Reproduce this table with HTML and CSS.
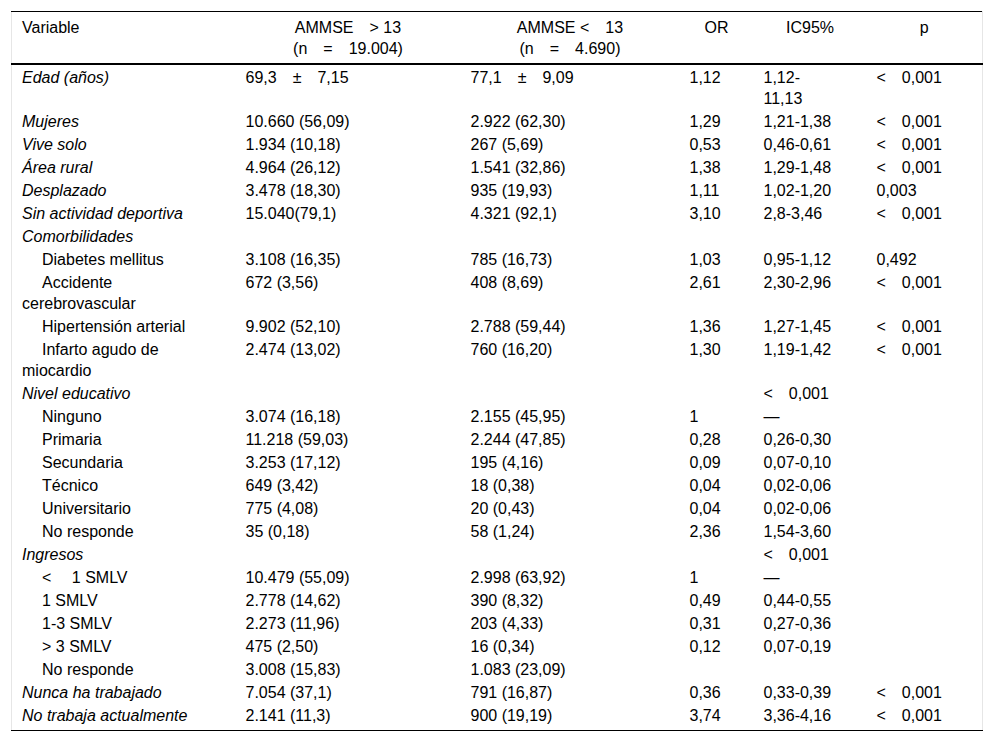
FILE: index.html
```html
<!DOCTYPE html>
<html lang="es">
<head>
<meta charset="utf-8">
<title>Tabla</title>
<link rel="stylesheet" href="styles.css">
</head>
<body>
<div class="wrap">
<table class="tbl">
<colgroup>
<col class="c1"><col class="c2"><col class="c3"><col class="c4"><col class="c5"><col class="c6">
</colgroup>
<thead>
<tr>
<th class="left">Variable</th>
<th>AMMSE&emsp;&gt; 13<br>(n&emsp;=&emsp;19.004)</th>
<th>AMMSE &lt;&emsp;13<br>(n&emsp;=&emsp;4.690)</th>
<th>OR</th>
<th>IC95%</th>
<th>p</th>
</tr>
</thead>
<tbody>
<tr><td class="v">Edad (años)</td><td>69,3&emsp;±&emsp;7,15</td><td>77,1&emsp;±&emsp;9,09</td><td>1,12</td><td>1,12-<br>11,13</td><td>&lt;&emsp;0,001</td></tr>
<tr><td class="v">Mujeres</td><td>10.660 (56,09)</td><td>2.922 (62,30)</td><td>1,29</td><td>1,21-1,38</td><td>&lt;&emsp;0,001</td></tr>
<tr><td class="v">Vive solo</td><td>1.934 (10,18)</td><td>267 (5,69)</td><td>0,53</td><td>0,46-0,61</td><td>&lt;&emsp;0,001</td></tr>
<tr><td class="v">Área rural</td><td>4.964 (26,12)</td><td>1.541 (32,86)</td><td>1,38</td><td>1,29-1,48</td><td>&lt;&emsp;0,001</td></tr>
<tr><td class="v">Desplazado</td><td>3.478 (18,30)</td><td>935 (19,93)</td><td>1,11</td><td>1,02-1,20</td><td>0,003</td></tr>
<tr><td class="v">Sin actividad deportiva</td><td>15.040(79,1)</td><td>4.321 (92,1)</td><td>3,10</td><td>2,8-3,46</td><td>&lt;&emsp;0,001</td></tr>
<tr><td class="v">Comorbilidades</td><td></td><td></td><td></td><td></td><td></td></tr>
<tr><td class="sub">Diabetes mellitus</td><td>3.108 (16,35)</td><td>785 (16,73)</td><td>1,03</td><td>0,95-1,12</td><td>0,492</td></tr>
<tr><td class="sub">Accidente<br>cerebrovascular</td><td>672 (3,56)</td><td>408 (8,69)</td><td>2,61</td><td>2,30-2,96</td><td>&lt;&emsp;0,001</td></tr>
<tr><td class="sub">Hipertensión arterial</td><td>9.902 (52,10)</td><td>2.788 (59,44)</td><td>1,36</td><td>1,27-1,45</td><td>&lt;&emsp;0,001</td></tr>
<tr><td class="sub">Infarto agudo de<br>miocardio</td><td>2.474 (13,02)</td><td>760 (16,20)</td><td>1,30</td><td>1,19-1,42</td><td>&lt;&emsp;0,001</td></tr>
<tr><td class="v">Nivel educativo</td><td></td><td></td><td></td><td>&lt;&emsp;0,001</td><td></td></tr>
<tr><td class="sub">Ninguno</td><td>3.074 (16,18)</td><td>2.155 (45,95)</td><td>1</td><td>—</td><td></td></tr>
<tr><td class="sub">Primaria</td><td>11.218 (59,03)</td><td>2.244 (47,85)</td><td>0,28</td><td>0,26-0,30</td><td></td></tr>
<tr><td class="sub">Secundaria</td><td>3.253 (17,12)</td><td>195 (4,16)</td><td>0,09</td><td>0,07-0,10</td><td></td></tr>
<tr><td class="sub">Técnico</td><td>649 (3,42)</td><td>18 (0,38)</td><td>0,04</td><td>0,02-0,06</td><td></td></tr>
<tr><td class="sub">Universitario</td><td>775 (4,08)</td><td>20 (0,43)</td><td>0,04</td><td>0,02-0,06</td><td></td></tr>
<tr><td class="sub">No responde</td><td>35 (0,18)</td><td>58 (1,24)</td><td>2,36</td><td>1,54-3,60</td><td></td></tr>
<tr><td class="v">Ingresos</td><td></td><td></td><td></td><td>&lt;&emsp;0,001</td><td></td></tr>
<tr><td class="sub">&lt;&emsp; 1 SMLV</td><td>10.479 (55,09)</td><td>2.998 (63,92)</td><td>1</td><td>—</td><td></td></tr>
<tr><td class="sub">1 SMLV</td><td>2.778 (14,62)</td><td>390 (8,32)</td><td>0,49</td><td>0,44-0,55</td><td></td></tr>
<tr><td class="sub">1-3 SMLV</td><td>2.273 (11,96)</td><td>203 (4,33)</td><td>0,31</td><td>0,27-0,36</td><td></td></tr>
<tr><td class="sub">&gt; 3 SMLV</td><td>475 (2,50)</td><td>16 (0,34)</td><td>0,12</td><td>0,07-0,19</td><td></td></tr>
<tr><td class="sub">No responde</td><td>3.008 (15,83)</td><td>1.083 (23,09)</td><td></td><td></td><td></td></tr>
<tr><td class="v">Nunca ha trabajado</td><td>7.054 (37,1)</td><td>791 (16,87)</td><td>0,36</td><td>0,33-0,39</td><td>&lt;&emsp;0,001</td></tr>
<tr class="last"><td class="v">No trabaja actualmente</td><td>2.141 (11,3)</td><td>900 (19,19)</td><td>3,74</td><td>3,36-4,16</td><td>&lt;&emsp;0,001</td></tr>
</tbody>
</table>
</div>
</body>
</html>
```

FILE: styles.css
```css
html, body {
  margin: 0;
  padding: 0;
  background: #fff;
}
body {
  font-family: "Liberation Sans", Arial, sans-serif;
  font-size: 16px;
  color: #000;
}
.wrap {
  padding: 11px 10px 0 11px;
}
.tbl {
  width: 100%;
  border-collapse: collapse;
  table-layout: fixed;
  border-top: 1px solid #000;
  border-bottom: 1px solid #000;
  border-left: 1px solid #e6e6e6;
  border-right: 1px solid #e6e6e6;
  line-height: 21px;
}
.c1 { width: 224px; }
.c2 { width: 225px; }
.c3 { width: 219px; }
.c4 { width: 74px; }
.c5 { width: 113px; }
.c6 { width: 116px; }
.tbl th {
  font-weight: normal;
  text-align: center;
  vertical-align: top;
  padding: 5px 10px 4px 10px;
  border-bottom: 2px solid #000;
}
.tbl th.left {
  text-align: left;
}
.tbl td {
  text-align: left;
  vertical-align: top;
  padding: 2px 10px 0 10px;
}
.tbl td.v {
  font-style: italic;
}
.tbl td.sub {
  text-indent: 20px;
}
.tbl tr.last td {
  padding-bottom: 4px;
}
```
